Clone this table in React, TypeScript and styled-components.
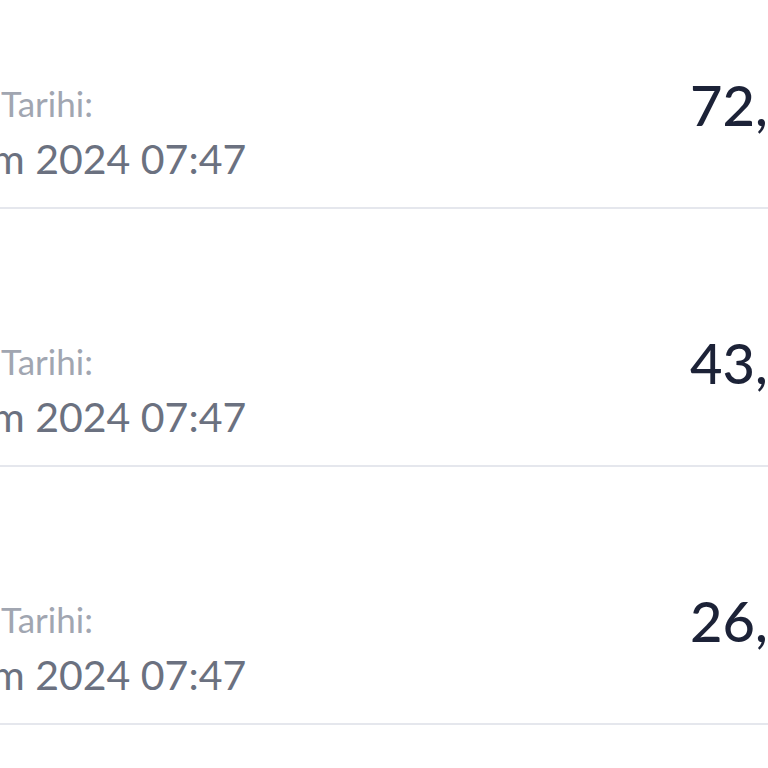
import styled, { createGlobalStyle } from 'styled-components';

const GlobalStyle = createGlobalStyle`
  html, body {
    margin: 0;
    padding: 0;
    background: #ffffff;
    overflow: hidden;
  }
  body {
    font-family: Lato, 'Noto Sans', sans-serif;
    -webkit-font-smoothing: antialiased;
  }
`;

const List = styled.div`
  width: 768px;
  display: flex;
  flex-direction: column;
  margin-top: -49px;
`;

const Row = styled.div`
  box-sizing: border-box;
  height: 258px;
  flex-shrink: 0;
  display: grid;
  grid-template-columns: 1fr 78px;
  align-items: start;
  align-content: end;
  padding-bottom: 24px;
  border-bottom: 2px solid #e5e7ed;
  overflow: hidden;
`;

const Info = styled.div`
  display: flex;
  flex-direction: column;
  gap: 11px;
`;

const Label = styled.div`
  font-size: 35px;
  line-height: 42px;
  color: #a1a6b1;
  padding-left: 1px;
`;

const DateText = styled.div`
  font-size: 41px;
  line-height: 48px;
  color: #6b7180;
  text-indent: -9px;
  white-space: nowrap;
`;

const Amount = styled.div`
  font-size: 56px;
  line-height: 60px;
  font-weight: 500;
  color: #1c2237;
  white-space: nowrap;
  margin-top: -7px;
`;

const rows = [
  { amount: '72,40' },
  { amount: '43,20' },
  { amount: '26,10' },
];

export default function App() {
  return (
    <>
      <GlobalStyle />
      <List>
        {rows.map((r) => (
          <Row key={r.amount}>
            <Info>
              <Label>Tarihi:</Label>
              <DateText>m 2024 07:47</DateText>
            </Info>
            <Amount>{r.amount}</Amount>
          </Row>
        ))}
      </List>
    </>
  );
}
